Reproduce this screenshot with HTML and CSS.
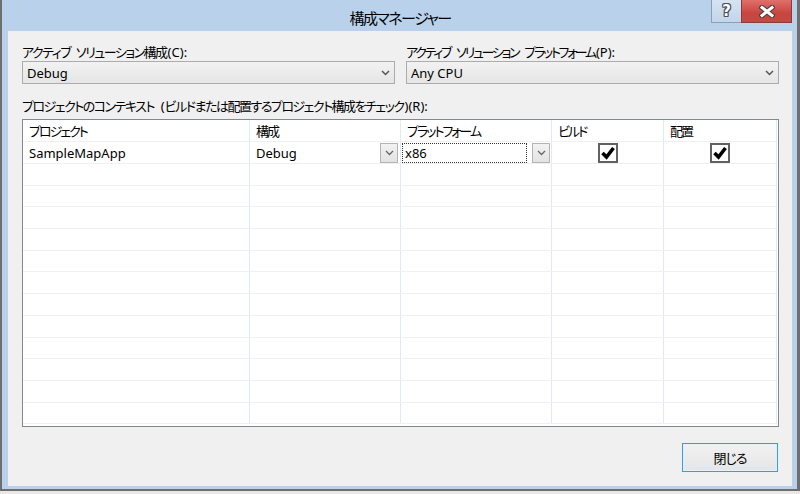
FILE: index.html
```html
<!DOCTYPE html>
<html lang="ja">
<head>
<meta charset="utf-8">
<title>構成マネージャー</title>
<link rel="stylesheet" href="styles.css">
</head>
<body>
<div class="window">
  <div class="titlebar">
    <div class="title">構成マネージャー</div>
    <div class="caption-buttons">
      <div class="btn-help"><span class="help-glyph">?</span></div>
      <div class="btn-close">
        <svg width="16" height="13" viewBox="0 0 16 13">
          <path d="M3 2.5 L13 10.5 M13 2.5 L3 10.5" stroke="#47403f" stroke-width="5.2" stroke-linecap="square"/>
          <path d="M3 2.5 L13 10.5 M13 2.5 L3 10.5" stroke="#ffffff" stroke-width="3" stroke-linecap="square"/>
        </svg>
      </div>
    </div>
  </div>
  <div class="content">
    <div class="top-fields">
      <div class="field">
        <div class="label jp">アクティブ ソリューション構成<span class="lat">(C):</span></div>
        <div class="combo"><span>Debug</span><svg class="chev" width="9" height="6" viewBox="0 0 9 6"><path d="M1 1 L4.5 4.5 L8 1" fill="none" stroke="#555" stroke-width="1.5"/></svg></div>
      </div>
      <div class="field">
        <div class="label jp tight">アクティブ ソリューション プラットフォーム<span class="lat">(P):</span></div>
        <div class="combo"><span>Any CPU</span><svg class="chev" width="9" height="6" viewBox="0 0 9 6"><path d="M1 1 L4.5 4.5 L8 1" fill="none" stroke="#555" stroke-width="1.5"/></svg></div>
      </div>
    </div>
    <div class="label jp ctx-label">プロジェクトのコンテキスト <span class="lat">(</span>ビルドまたは配置するプロジェクト構成をチェック<span class="lat">)(R):</span></div>
    <div class="table">
      <div class="row header">
        <div class="cell jp">プロジェクト</div>
        <div class="cell jp">構成</div>
        <div class="cell jp">プラットフォーム</div>
        <div class="cell jp">ビルド</div>
        <div class="cell jp">配置</div>
      </div>
      <div class="row">
        <div class="cell">SampleMapApp</div>
        <div class="cell split"><span>Debug</span><div class="mini-btn"><svg width="9" height="6" viewBox="0 0 9 6"><path d="M1 1 L4.5 4.5 L8 1" fill="none" stroke="#666" stroke-width="1.3"/></svg></div></div>
        <div class="cell split plat"><div class="textbox">x86</div><div class="mini-btn"><svg width="9" height="6" viewBox="0 0 9 6"><path d="M1 1 L4.5 4.5 L8 1" fill="none" stroke="#666" stroke-width="1.3"/></svg></div></div>
        <div class="cell center"><div class="checkbox"><svg width="16" height="16" viewBox="0 0 16 16"><path d="M2.5 8 L6.5 12 L13.5 3" fill="none" stroke="#000" stroke-width="3.6"/></svg></div></div>
        <div class="cell center"><div class="checkbox"><svg width="16" height="16" viewBox="0 0 16 16"><path d="M2.5 8 L6.5 12 L13.5 3" fill="none" stroke="#000" stroke-width="3.6"/></svg></div></div>
      </div>
      <div class="row empty"><div class="cell"></div><div class="cell"></div><div class="cell"></div><div class="cell"></div><div class="cell"></div></div>
      <div class="row empty"><div class="cell"></div><div class="cell"></div><div class="cell"></div><div class="cell"></div><div class="cell"></div></div>
      <div class="row empty"><div class="cell"></div><div class="cell"></div><div class="cell"></div><div class="cell"></div><div class="cell"></div></div>
      <div class="row empty"><div class="cell"></div><div class="cell"></div><div class="cell"></div><div class="cell"></div><div class="cell"></div></div>
      <div class="row empty"><div class="cell"></div><div class="cell"></div><div class="cell"></div><div class="cell"></div><div class="cell"></div></div>
      <div class="row empty"><div class="cell"></div><div class="cell"></div><div class="cell"></div><div class="cell"></div><div class="cell"></div></div>
      <div class="row empty"><div class="cell"></div><div class="cell"></div><div class="cell"></div><div class="cell"></div><div class="cell"></div></div>
      <div class="row empty"><div class="cell"></div><div class="cell"></div><div class="cell"></div><div class="cell"></div><div class="cell"></div></div>
      <div class="row empty"><div class="cell"></div><div class="cell"></div><div class="cell"></div><div class="cell"></div><div class="cell"></div></div>
      <div class="row empty"><div class="cell"></div><div class="cell"></div><div class="cell"></div><div class="cell"></div><div class="cell"></div></div>
      <div class="row empty"><div class="cell"></div><div class="cell"></div><div class="cell"></div><div class="cell"></div><div class="cell"></div></div>
      <div class="row empty"><div class="cell"></div><div class="cell"></div><div class="cell"></div><div class="cell"></div><div class="cell"></div></div>
    </div>
    <div class="footer">
      <button class="close-button">閉じる</button>
    </div>
  </div>
</div>
</body>
</html>
```

FILE: styles.css
```css
html, body {
  margin: 0;
  padding: 0;
}
body {
  width: 800px;
  height: 494px;
  overflow: hidden;
  background: #e8e8e8;
  font-family: "Noto Sans", "Noto Sans CJK JP", sans-serif;
  font-size: 13px;
  color: #000;
  font-feature-settings: "palt";
}
.jp {
  letter-spacing: -1.5px;
  word-spacing: 4px;
}
.jp.tight {
  letter-spacing: -2.3px;
  word-spacing: 5px;
}
.lat {
  letter-spacing: 0;
  margin-left: 1px;
}
.header .jp {
  letter-spacing: -2px;
}
.window {
  box-sizing: border-box;
  width: 800px;
  height: 491px;
  background: #b9d1ea;
  border-left: 2px solid #6e6e6e;
  border-right: 3px solid #6e6e6e;
  border-bottom: 2px solid #6e6e6e;
  padding: 0 5px 3px 6px;
  display: flex;
  flex-direction: column;
}
.titlebar {
  height: 31px;
  flex: none;
  position: relative;
  display: flex;
  justify-content: center;
  align-items: center;
}
.title {
  font-family: "Noto Sans CJK JP", sans-serif;
  font-size: 15px;
  letter-spacing: -1.5px;
  color: #000;
  padding-top: 3px;
}
.caption-buttons {
  position: absolute;
  top: 0;
  right: 0;
  display: flex;
}
.btn-help {
  box-sizing: border-box;
  width: 30px;
  height: 23px;
  background: linear-gradient(#d6e3f2, #c3d5ea);
  border: 1px solid #8c9fb8;
  border-top: none;
  border-right: none;
  display: flex;
  align-items: center;
  justify-content: center;
}
.help-glyph {
  font-family: "DejaVu Sans", sans-serif;
  font-weight: bold;
  font-size: 15px;
  color: #fff;
  line-height: 1;
  text-shadow: 1px 0 0 #4a4f58, -1px 0 0 #4a4f58, 0 1px 0 #4a4f58, 0 -1px 0 #4a4f58, 1px 1px 0 #4a4f58, -1px -1px 0 #4a4f58, 1px -1px 0 #4a4f58, -1px 1px 0 #4a4f58;
}
.btn-close {
  box-sizing: border-box;
  width: 51px;
  height: 23px;
  background: linear-gradient(#e0706a, #c9453f 60%, #c24a44);
  border: 1px solid #8b3a36;
  border-top: none;
  display: flex;
  align-items: center;
  justify-content: center;
}
.content {
  flex: 1;
  background: #f0f0f0;
  padding: 12px 13px 14px 14px;
  display: flex;
  flex-direction: column;
}
.label {
  height: 18px;
  line-height: 18px;
  white-space: nowrap;
}
.top-fields {
  display: grid;
  grid-template-columns: 373px 373px;
  column-gap: 11px;
}
.combo {
  box-sizing: border-box;
  height: 23px;
  border: 1px solid #acacac;
  background: linear-gradient(#f2f2f2, #e5e5e5);
  display: flex;
  align-items: center;
  justify-content: space-between;
  padding: 0 4px 0 4px;
}
.chev {
  display: block;
}
.ctx-label {
  margin-top: 13px;
}
.table {
  box-sizing: border-box;
  margin-top: 4px;
  height: 308px;
  border: 1px solid #828790;
  background: #fff;
  overflow: hidden;
}
.row {
  display: grid;
  grid-template-columns: 227px 151px 151px 112px 113px;
  height: 22px;
  box-sizing: border-box;
  border-bottom: 1px solid #f0f0f0;
}
.row.empty {
  height: 21.7px;
}
.cell {
  box-sizing: border-box;
  border-right: 1px solid #e1e9f3;
  padding-left: 6px;
  display: flex;
  align-items: center;
  white-space: nowrap;
}
.split {
  justify-content: space-between;
  padding-right: 2px;
}
.plat {
  padding-left: 1px;
  padding-right: 1px;
}
.mini-btn {
  box-sizing: border-box;
  width: 18px;
  height: 20px;
  border: 1px solid #b4b4b4;
  background: linear-gradient(#f2f2f2, #e3e3e3);
  display: flex;
  align-items: center;
  justify-content: center;
}
.textbox {
  box-sizing: border-box;
  width: 125px;
  height: 20px;
  border: 1px dotted #333;
  background: #fff;
  padding-left: 2px;
  display: flex;
  align-items: center;
}
.center {
  justify-content: center;
  padding-left: 0;
}
.checkbox {
  box-sizing: border-box;
  width: 20px;
  height: 20px;
  border: 2px solid #616161;
  background: #fff;
  display: flex;
  align-items: center;
  justify-content: center;
}
.footer {
  display: flex;
  justify-content: flex-end;
  margin-top: 16px;
  padding-right: 1px;
}
.close-button {
  box-sizing: border-box;
  width: 96px;
  height: 29px;
  margin: 0;
  border: 1px solid #3399ff;
  box-shadow: inset 0 0 0 1px #e6f2fc;
  background: linear-gradient(#f2f2f2, #e5e5e5);
  font-family: "Noto Sans CJK JP", sans-serif;
  font-feature-settings: "palt";
  font-size: 13px;
  letter-spacing: -1px;
  color: #000;
  padding: 0;
}
```
